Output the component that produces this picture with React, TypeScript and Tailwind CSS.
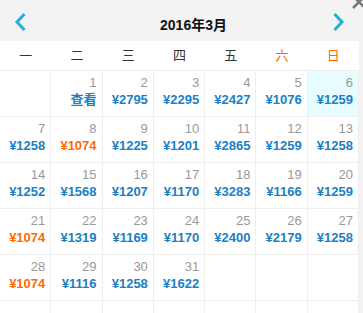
import React from "react";

type Day = { d: number; price?: string; low?: boolean; today?: boolean };

const WEEK = ["一", "二", "三", "四", "五", "六", "日"];

const cells: (Day | null)[] = [
  null,
  { d: 1, price: "查看" },
  { d: 2, price: "¥2795" },
  { d: 3, price: "¥2295" },
  { d: 4, price: "¥2427" },
  { d: 5, price: "¥1076" },
  { d: 6, price: "¥1259", today: true },
  { d: 7, price: "¥1258" },
  { d: 8, price: "¥1074", low: true },
  { d: 9, price: "¥1225" },
  { d: 10, price: "¥1201" },
  { d: 11, price: "¥2865" },
  { d: 12, price: "¥1259" },
  { d: 13, price: "¥1258" },
  { d: 14, price: "¥1252" },
  { d: 15, price: "¥1568" },
  { d: 16, price: "¥1207" },
  { d: 17, price: "¥1170" },
  { d: 18, price: "¥3283" },
  { d: 19, price: "¥1166" },
  { d: 20, price: "¥1259" },
  { d: 21, price: "¥1074", low: true },
  { d: 22, price: "¥1319" },
  { d: 23, price: "¥1169" },
  { d: 24, price: "¥1170" },
  { d: 25, price: "¥2400" },
  { d: 26, price: "¥2179" },
  { d: 27, price: "¥1258" },
  { d: 28, price: "¥1074", low: true },
  { d: 29, price: "¥1116" },
  { d: 30, price: "¥1258" },
  { d: 31, price: "¥1622" },
  null, null, null,
  null, null, null, null, null, null, null,
];

const Chevron = ({ dir }: { dir: "left" | "right" }) => (
  <svg width="13" height="20" viewBox="0 0 13 20">
    <polyline
      points={dir === "left" ? "10.5,2 3,10 10.5,18" : "2.5,2 10,10 2.5,18"}
      fill="none"
      stroke="#27aedb"
      strokeWidth="3"
    />
  </svg>
);

export default function App() {
  return (
    <div
      className="relative w-[363px] h-[313px] overflow-hidden bg-[#f3f3f3]"
      style={{ fontFamily: '"Liberation Sans", "Noto Sans CJK SC", sans-serif' }}
    >
      {/* close button */}
      <svg className="absolute left-[351px] top-[-6px]" width="16" height="16" viewBox="0 0 16 16">
        <path d="M2 2 L14 14 M14 2 L2 14" stroke="#7a7a7a" strokeWidth="2.6" />
      </svg>

      <div className="w-[359px]">
        {/* header */}
        <div className="flex h-[41px] items-center">
          <button className="flex w-[41px] h-full items-center justify-center pt-[3px]">
            <Chevron dir="left" />
          </button>
          <div className="flex-1 pl-[28px] pt-[10px] text-center text-[14px] font-bold text-[#111]">2016年3月</div>
          <button className="flex w-[41px] h-full items-center justify-center pt-[3px]">
            <Chevron dir="right" />
          </button>
        </div>

        {/* weekdays */}
        <div className="grid grid-cols-7 h-[30px] bg-white border-b border-[#eeeeee]">
          {WEEK.map((w, i) => (
            <div
              key={w}
              className={`flex items-center justify-center text-[13px] ${i >= 5 ? "text-[#ff6600]" : "text-[#333]"}`}
            >
              {w}
            </div>
          ))}
        </div>

        {/* days */}
        <div className="grid grid-cols-7 bg-white">
          {cells.map((c, i) => (
            <div
              key={i}
              className={`h-[46px] border-r border-b border-[#eeeeee] pr-[5px] pt-[4px] text-right ${c?.today ? "bg-[#e6fcff]" : ""}`}
            >
              {c && (
                <>
                  <div className="text-[13px] leading-[16px] text-[#999]">{c.d}</div>
                  <div
                    className={`text-[13px] leading-[17px] font-bold ${c.low ? "text-[#ff6a00]" : "text-[#1b80c4]"}`}
                  >
                    {c.price}
                  </div>
                </>
              )}
            </div>
          ))}
        </div>
      </div>
    </div>
  );
}
